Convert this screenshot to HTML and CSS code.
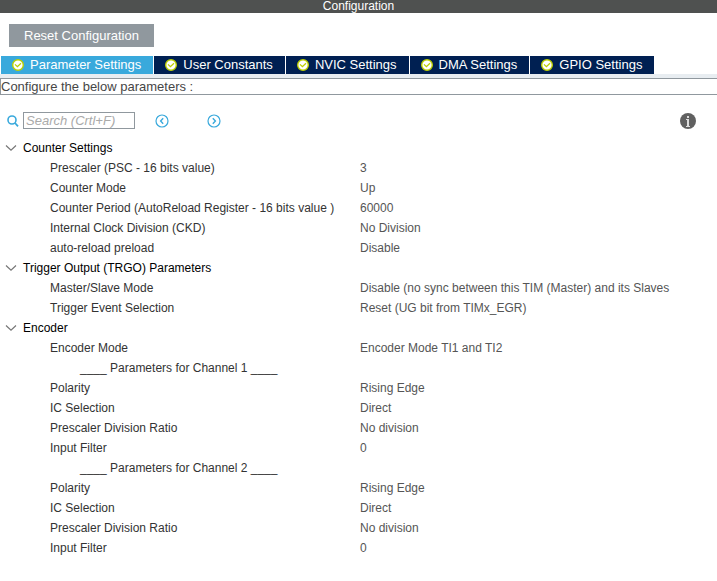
FILE: index.html
```html
<!DOCTYPE html>
<html lang="en">
<head>
<meta charset="utf-8">
<title>Configuration</title>
<link rel="stylesheet" href="styles.css">
</head>
<body>
<svg class="defs" aria-hidden="true">
  <symbol id="check" viewBox="0 0 12 12">
    <circle cx="6" cy="6" r="5.3" fill="#fff" stroke="#bccf00" stroke-width="1.4"/>
    <path d="M3 5.4 5.4 7.7 9 4.2" fill="none" stroke="#bccf00" stroke-width="1.3"/>
  </symbol>
  <symbol id="chevron" viewBox="0 0 12 8">
    <path d="M1 1.5 6 6.2 11 1.5" fill="none" stroke="#777" stroke-width="1.2"/>
  </symbol>
</svg>
<header class="titlebar"><h1>Configuration</h1></header>
<main>
  <button class="reset" type="button">Reset Configuration</button>
  <nav class="tabs" role="tablist">
    <button class="tab active" role="tab" aria-selected="true"><svg class="check"><use href="#check"/></svg>Parameter Settings</button>
    <button class="tab" role="tab"><svg class="check"><use href="#check"/></svg>User Constants</button>
    <button class="tab" role="tab"><svg class="check"><use href="#check"/></svg>NVIC Settings</button>
    <button class="tab" role="tab"><svg class="check"><use href="#check"/></svg>DMA Settings</button>
    <button class="tab" role="tab"><svg class="check"><use href="#check"/></svg>GPIO Settings</button>
  </nav>
  <p class="hint">Configure the below parameters :</p>
  <div class="toolbar">
    <label class="search-label" for="search" aria-label="Search">
      <svg width="12" height="12" viewBox="0 0 12 12"><circle cx="5" cy="5" r="4" fill="none" stroke="#39a9dc" stroke-width="1.6"/><path d="M8 8 11 11.3" stroke="#39a9dc" stroke-width="1.8"/></svg>
    </label>
    <input class="search" id="search" type="text" placeholder="Search (Crtl+F)">
    <button class="icon-button previous" type="button" aria-label="Previous">
      <svg width="14" height="14" viewBox="0 0 14 14" fill="none" stroke="#39a9dc"><circle cx="7" cy="7" r="6" stroke-width="1.2"/><path d="M8.2 4.2 5.6 7 8.2 9.8" stroke-width="1.4"/></svg>
    </button>
    <button class="icon-button next" type="button" aria-label="Next">
      <svg width="14" height="14" viewBox="0 0 14 14" fill="none" stroke="#39a9dc"><circle cx="7" cy="7" r="6" stroke-width="1.2"/><path d="M5.8 4.2 8.4 7 5.8 9.8" stroke-width="1.4"/></svg>
    </button>
    <button class="icon-button info" type="button" aria-label="Information">
      <svg width="16" height="16" viewBox="0 0 16 16"><circle cx="8" cy="8" r="8" fill="#606060"/><path d="M7 3h2v2H7zM6 6h3v7H7V7H6zM6 13h4v1H6z" fill="#ddd"/></svg>
    </button>
  </div>
  <table class="params">
    <colgroup><col class="name-column"><col></colgroup>
    <tbody>
      <tr><th colspan="2"><button class="group" type="button"><svg class="chevron"><use href="#chevron"/></svg>Counter Settings</button></th></tr>
      <tr><td>Prescaler (PSC - 16 bits value)</td><td>3</td></tr>
      <tr><td>Counter Mode</td><td>Up</td></tr>
      <tr><td>Counter Period (AutoReload Register - 16 bits value )</td><td>60000</td></tr>
      <tr><td>Internal Clock Division (CKD)</td><td>No Division</td></tr>
      <tr><td>auto-reload preload</td><td>Disable</td></tr>
    </tbody>
    <tbody>
      <tr><th colspan="2"><button class="group" type="button"><svg class="chevron"><use href="#chevron"/></svg>Trigger Output (TRGO) Parameters</button></th></tr>
      <tr><td>Master/Slave Mode</td><td>Disable (no sync between this TIM (Master) and its Slaves</td></tr>
      <tr><td>Trigger Event Selection</td><td>Reset (UG bit from TIMx_EGR)</td></tr>
    </tbody>
    <tbody>
      <tr><th colspan="2"><button class="group" type="button"><svg class="chevron"><use href="#chevron"/></svg>Encoder</button></th></tr>
      <tr><td>Encoder Mode</td><td>Encoder Mode TI1 and TI2</td></tr>
      <tr><td class="channel" colspan="2">____ Parameters for Channel 1 ____</td></tr>
      <tr><td>Polarity</td><td>Rising Edge</td></tr>
      <tr><td>IC Selection</td><td>Direct</td></tr>
      <tr><td>Prescaler Division Ratio</td><td>No division</td></tr>
      <tr><td>Input Filter</td><td>0</td></tr>
      <tr><td class="channel" colspan="2">____ Parameters for Channel 2 ____</td></tr>
      <tr><td>Polarity</td><td>Rising Edge</td></tr>
      <tr><td>IC Selection</td><td>Direct</td></tr>
      <tr><td>Prescaler Division Ratio</td><td>No division</td></tr>
      <tr><td>Input Filter</td><td>0</td></tr>
    </tbody>
  </table>
</main>
</body>
</html>
```
FILE: styles.css
```css
* { box-sizing: border-box; }
body {
  margin: 0;
  background: #fff;
  color: #333;
  font: 12px/20px "Liberation Sans", Arial, sans-serif;
}
button, input { margin: 0; border: 0; padding: 0; font: inherit; }
button { background: none; cursor: pointer; }
svg { display: block; flex: none; }
.defs { display: none; }
.titlebar { background: #4f5150; }
.titlebar h1 {
  margin: 0;
  color: #fff;
  font-size: 12px;
  font-weight: normal;
  line-height: 13px;
  text-align: center;
}
.reset {
  display: block;
  margin: 11px 9px 9px;
  padding: 0 15px;
  background: #90989e;
  color: #fff;
  font-size: 13px;
  line-height: 23px;
}
.tabs {
  display: flex;
  gap: 1px;
  padding-left: 1px;
}
.tab {
  display: flex;
  align-items: center;
  gap: 6px;
  padding: 0 12px 0 11px;
  background: #002052;
  color: #fff;
  font-size: 13px;
  line-height: 18px;
}
.tab.active { background: #39a9dc; }
.check { width: 12px; height: 12px; }
.hint {
  margin: 4px 0 0;
  border: 1px solid #90989e;
  border-right: 0;
  box-shadow: 0 -4px #e8edf1;
  color: #464646;
  font-size: 13px;
  line-height: 15px;
}
.toolbar {
  display: flex;
  align-items: center;
  margin: 17px 21px 9px 7px;
}
.search-label { margin-right: 4px; }
.search {
  width: 112px;
  height: 17px;
  border: 1px solid #90989e;
  padding: 0 2px;
  font-size: 13px;
  line-height: 15px;
}
.search::placeholder { color: #aaa; font-style: italic; opacity: 1; }
.previous { margin-left: 20px; }
.next { margin-left: 38px; }
.info { margin-left: auto; }
.params {
  width: 100%;
  border-collapse: collapse;
  table-layout: fixed;
}
.name-column { width: 360px; }
.params th, .params td {
  padding: 0;
  font-weight: normal;
  text-align: left;
  white-space: nowrap;
}
.params td:first-child { padding-left: 50px; }
.params td:last-child { color: #555; }
.params .channel:first-child { padding-left: 80px; color: #333; }
.group {
  display: flex;
  align-items: center;
  gap: 6px;
  padding-left: 5px;
  color: #000;
}
.chevron { width: 12px; height: 8px; }
```
